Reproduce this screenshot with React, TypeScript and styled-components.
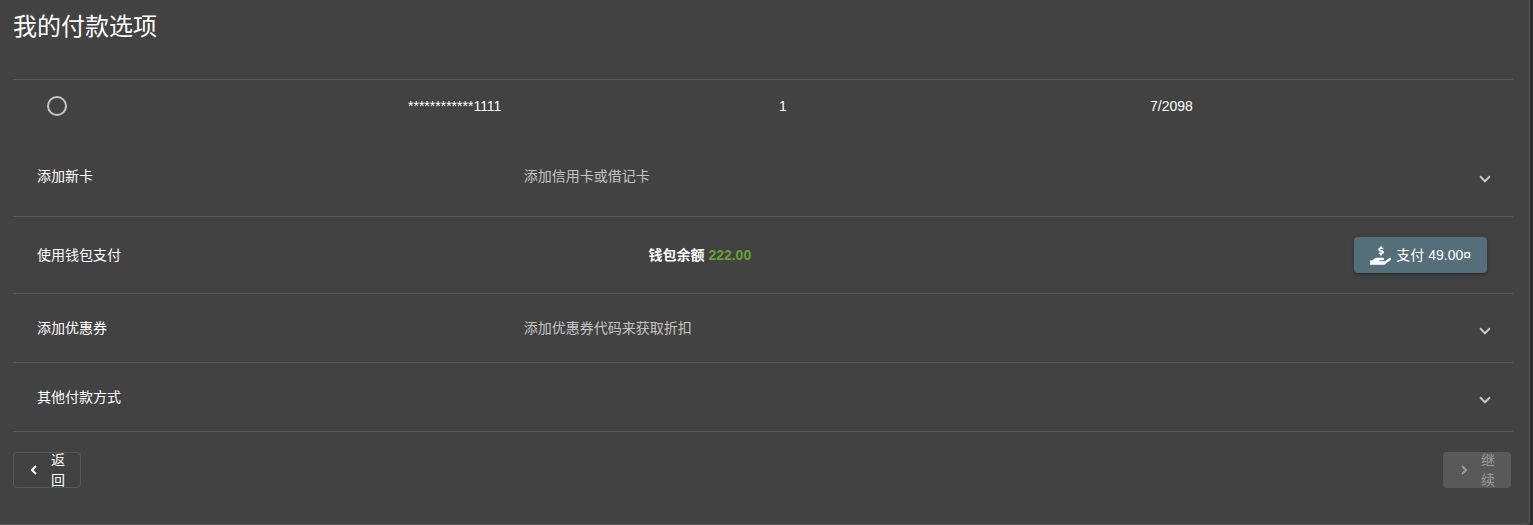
import React from "react";
import styled, { createGlobalStyle } from "styled-components";
import { FaHandHoldingUsd } from "react-icons/fa";

const line = "rgba(255, 255, 255, 0.12)";

const GlobalStyle = createGlobalStyle`
  *, *::before, *::after { box-sizing: border-box; }
  body {
    margin: 0;
    background: #2c2c2c;
    color: #fff;
    font-family: "Liberation Sans", "Noto Sans CJK SC", sans-serif;
    font-size: 14px;
    line-height: 20px;
  }
`;

const Card = styled.main`
  margin-right: 3px;
  padding: 11px 16px 36px 13px;
  background: #424242;
  border: solid ${line};
  border-width: 0 1px 1px 0;
  border-radius: 0 0 4px 0;
`;

const Title = styled.h1`
  margin: 0 0 36px;
  font-size: 24px;
  line-height: 32px;
  font-weight: 400;
`;

const CardTable = styled.table`
  width: 100%;
  margin-bottom: 4px;
  padding-left: 16px;
  border-top: 1px solid ${line};
  border-spacing: 0;
  table-layout: fixed;
`;

const Cell = styled.td`
  height: 52px;
  padding: 0 8px;
`;

const Radio = styled.input`
  appearance: none;
  display: block;
  width: 20px;
  height: 20px;
  margin: 0 10px;
  border: 2px solid rgba(255, 255, 255, 0.7);
  border-radius: 50%;
  cursor: pointer;

  &:checked {
    background: radial-gradient(#fff 5px, transparent 6px);
  }
`;

const PanelHeader = styled.button<{ $tall?: boolean }>`
  display: grid;
  grid-template-columns: 1fr 2fr 8px;
  gap: 16px;
  align-items: center;
  width: 100%;
  height: ${(p) => (p.$tall ? 81 : 69)}px;
  padding: 0 24px;
  border: 0;
  border-bottom: 1px solid ${line};
  background: transparent;
  color: inherit;
  font: inherit;
  text-align: left;
  cursor: pointer;
`;

const Description = styled.span`
  color: rgba(255, 255, 255, 0.7);
`;

const Indicator = styled.span`
  width: 8px;
  height: 8px;
  margin-top: 2px;
  border: solid rgba(255, 255, 255, 0.7);
  border-width: 0 2px 2px 0;
  transform: rotate(45deg);
`;

const WalletRow = styled.section`
  display: grid;
  grid-template-columns: 11fr 10fr 14fr;
  align-items: center;
  height: 77px;
  padding: 0 26px 0 24px;
  border-bottom: 1px solid ${line};
`;

const Balance = styled.strong`
  text-align: center;
`;

const Amount = styled.span`
  color: #689f38;
`;

const Button = styled.button`
  display: inline-flex;
  align-items: center;
  height: 36px;
  border: 1px solid transparent;
  border-radius: 4px;
  background: transparent;
  color: #fff;
  font: inherit;
  cursor: pointer;
`;

const PayButton = styled(Button)`
  justify-self: end;
  gap: 5px;
  padding: 0 15px;
  background: #546e7a;
  box-shadow: 0 3px 1px -2px rgba(0, 0, 0, 0.2), 0 2px 2px 0 rgba(0, 0, 0, 0.14),
    0 1px 5px 0 rgba(0, 0, 0, 0.12);
`;

const StepButton = styled(Button)`
  gap: 5px;
  width: 68px;
  padding: 0 15px 0 8px;
  border-color: ${line};

  &:disabled {
    border-color: transparent;
    background: ${line};
    color: rgba(255, 255, 255, 0.4);
    cursor: default;
  }
`;

const StepLabel = styled.span`
  width: 14px;
`;

const Footer = styled.footer`
  display: flex;
  justify-content: space-between;
  padding: 20px 2px 0 0;
`;

function Chevron({ back }: { back?: boolean }) {
  return (
    <svg width="24" height="24" viewBox="0 0 24 24" aria-hidden="true">
      <path
        d={back ? "M14 8l-4 4 4 4" : "M10 8l4 4-4 4"}
        fill="none"
        stroke="currentColor"
        strokeWidth="2"
      />
    </svg>
  );
}

interface PanelProps {
  title: string;
  description?: string;
  tall?: boolean;
}

function Panel({ title, description, tall }: PanelProps) {
  return (
    <PanelHeader type="button" aria-expanded={false} $tall={tall}>
      <span>{title}</span>
      <Description>{description}</Description>
      <Indicator />
    </PanelHeader>
  );
}

export default function App() {
  return (
    <>
      <GlobalStyle />
      <Card>
        <Title>我的付款选项</Title>
        <CardTable>
          <tbody>
            <tr>
              <Cell>
                <Radio type="radio" name="card" aria-labelledby="card-number" />
              </Cell>
              <Cell id="card-number">************1111</Cell>
              <Cell>1</Cell>
              <Cell>7/2098</Cell>
            </tr>
          </tbody>
        </CardTable>
        <Panel title="添加新卡" description="添加信用卡或借记卡" tall />
        <WalletRow>
          <span>使用钱包支付</span>
          <Balance>
            钱包余额 <Amount>222.00</Amount>
          </Balance>
          <PayButton type="button">
            <FaHandHoldingUsd size={21} aria-hidden="true" />
            <span>支付 49.00¤</span>
          </PayButton>
        </WalletRow>
        <Panel title="添加优惠券" description="添加优惠券代码来获取折扣" />
        <Panel title="其他付款方式" />
        <Footer>
          <StepButton type="button">
            <Chevron back />
            <StepLabel>返回</StepLabel>
          </StepButton>
          <StepButton type="button" disabled>
            <Chevron />
            <StepLabel>继续</StepLabel>
          </StepButton>
        </Footer>
      </Card>
    </>
  );
}
